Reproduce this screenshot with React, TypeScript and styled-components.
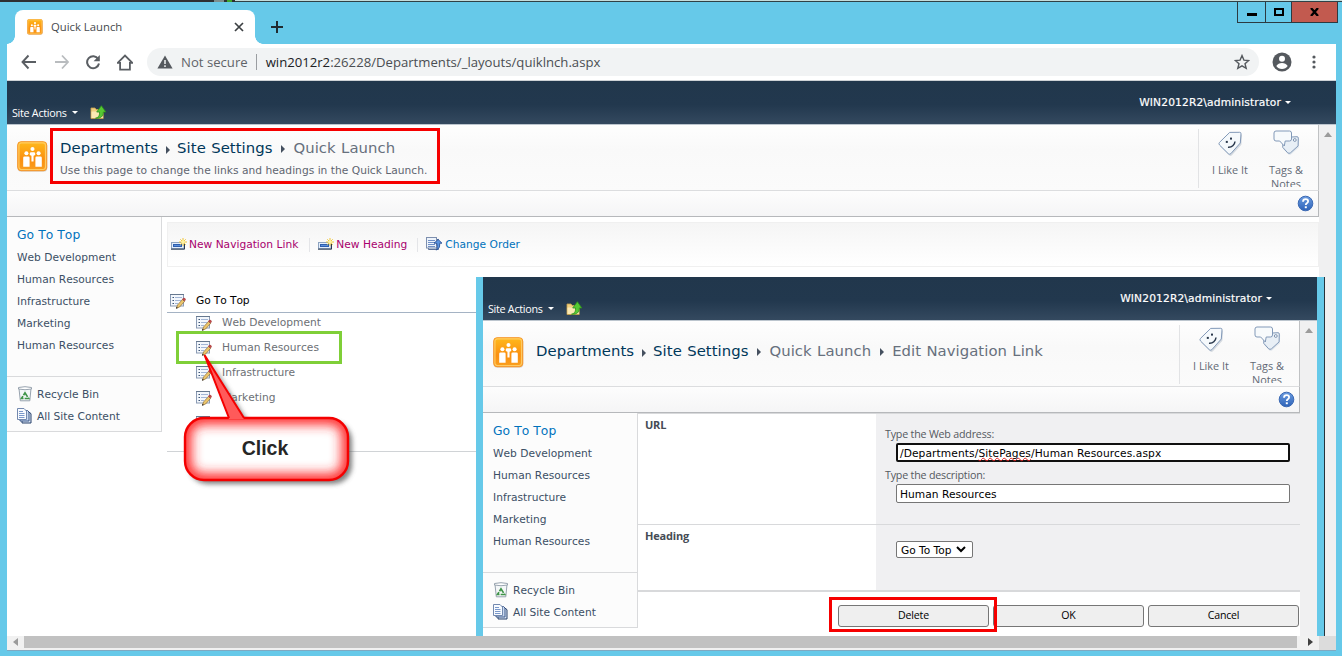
import React from "react";
import styled, { createGlobalStyle } from "styled-components";

const verdana = `Verdana, "DejaVu Sans", sans-serif`;
const segoe = `"Open Sans", "Noto Sans", sans-serif`;

const Global = createGlobalStyle`
  * { box-sizing: border-box; }
  body { margin: 0; background: #66c9e9; overflow: hidden; }
  svg { display: block; flex: none; }
`;

/* ---------- desktop and browser frame ---------- */

const Desktop = styled.div`
  position: relative;
  width: 1342px;
  height: 656px;
  display: flex;
  flex-direction: column;
  background: #66c9e9;
  font-family: ${verdana};
  font-size: 10.67px;
  font-kerning: none;
  white-space: nowrap;
  overflow: hidden;
`;

const BackEdge = styled.div`
  display: flex;
  height: 2px;
  flex: none;
  background: linear-gradient(#c3dcdb 50%, #2f4146 50%);
`;

const EdgePiece = styled.div<{ $w: number; $c: string }>`
  width: ${(p) => p.$w}px;
  background: ${(p) => p.$c};
`;

const TabStrip = styled.div`
  display: flex;
  justify-content: space-between;
  height: 42px;
  flex: none;
  padding: 0 4px 0 15px;
`;

const TabSide = styled.div`
  display: flex;
  align-items: flex-end;
`;

const Tab = styled.div`
  position: relative;
  display: flex;
  align-items: center;
  width: 240px;
  height: 34px;
  padding: 0 11px 0 12px;
  background: #fff;
  border-radius: 8px 8px 0 0;
  font: 11.3px ${segoe};
  color: #45494d;
  &::before,
  &::after {
    content: "";
    position: absolute;
    bottom: 0;
    width: 8px;
    height: 8px;
  }
  &::before {
    left: -8px;
    background: radial-gradient(circle at 0 0, transparent 7.5px, #fff 8px);
  }
  &::after {
    right: -8px;
    background: radial-gradient(circle at 100% 0, transparent 7.5px, #fff 8px);
  }
`;

const TabTitle = styled.span`
  flex: 1;
  margin-left: 8px;
  padding-bottom: 2px;
`;

const NewTab = styled.div`
  margin: 0 0 11px 16px;
`;

const WindowButtons = styled.div`
  display: flex;
  height: 21px;
  border: 1px solid #2c3a40;
  border-top: 0;
`;

const WindowButton = styled.div<{ $w: number; $close?: boolean }>`
  display: flex;
  align-items: center;
  justify-content: center;
  width: ${(p) => p.$w}px;
  background: ${(p) => (p.$close ? "#c25a4f" : "transparent")};
  & + & {
    border-left: 1px solid #2c3a40;
  }
`;

const Frame = styled.div`
  display: flex;
  flex-direction: column;
  width: 1329px;
  height: 607px;
  margin-left: 7px;
  flex: none;
  background: #fff;
  border-bottom: 1px solid #7fa9c2;
`;

const AddressRow = styled.div`
  display: flex;
  align-items: center;
  height: 37px;
  flex: none;
  padding-left: 13px;
  border-bottom: 1px solid #cdd2d6;
`;

const NavButton = styled.div<{ $gap?: number }>`
  margin-right: ${(p) => p.$gap ?? 14}px;
`;

const Omnibox = styled.div`
  display: flex;
  align-items: center;
  width: 1112px;
  height: 28px;
  padding: 0 9px 0 10px;
  border-radius: 14px;
  background: #f1f3f4;
  font: 13.15px ${segoe};
  color: #5f6368;
`;

const Divider = styled.span<{ $h: number; $c: string; $m: string }>`
  width: 1px;
  height: ${(p) => p.$h}px;
  margin: ${(p) => p.$m};
  background: ${(p) => p.$c};
`;

const Url = styled.span`
  flex: 1;
  color: #4a4e52;
  b {
    font-weight: 400;
    color: #202124;
  }
`;

const HorizontalScroll = styled.div`
  display: flex;
  height: 14px;
  flex: none;
  background: #f1f1f1;
`;

const ScrollArrowCell = styled.div<{ $w: number }>`
  display: flex;
  align-items: center;
  justify-content: center;
  width: ${(p) => p.$w}px;
  height: 12px;
`;

const ScrollThumb = styled.div`
  width: 1273px;
  height: 12px;
  background: #c1c1c1;
`;

const ScrollCorner = styled.div`
  width: 17px;
  background: #dcdcdc;
`;

/* ---------- site page ---------- */

const Page = styled.div`
  display: flex;
  flex-direction: column;
  flex: 1;
  min-width: 0;
  min-height: 0;
  background: #fff;
`;

const TopBar = styled.div`
  display: flex;
  justify-content: space-between;
  height: 44px;
  flex: none;
  padding: 0 45px 0 5px;
  background: linear-gradient(#21374c 0, #22384e 55%, #34495f 100%);
  border-bottom: 1px solid #bcc5ce;
  color: #fff;
`;

const SiteActions = styled.div`
  display: flex;
  align-items: center;
  align-self: flex-end;
  height: 24px;
  font: 10.8px ${segoe};
  letter-spacing: -0.3px;
`;

const Caret = styled.span`
  margin: 0 12px 0 5px;
  border: 3px solid transparent;
  border-top-color: currentColor;
  border-bottom: 0;
`;

const UserMenu = styled.div`
  display: flex;
  align-items: center;
  height: 42px;
  letter-spacing: 0.14px;
  -webkit-text-stroke: 0.2px #fff;
  ${Caret} {
    margin: 0 0 0 4px;
  }
`;

const Below = styled.div`
  display: flex;
  flex: 1;
  min-height: 0;
`;

const Main = styled.div`
  flex: 1;
  min-width: 0;
`;

const Gutter = styled.div`
  width: 17px;
  padding: 7px 0 0 5px;
  background: #f0f0f1;
`;

const TitleArea = styled.div`
  display: flex;
  height: 66px;
  padding-left: 10px;
  background: linear-gradient(#fefefe, #f9f9f9 40%, #fbfbfb);
  border-right: 1px solid #c0c2c4;
  border-bottom: 1px solid #dcdddf;
`;

const LogoSlot = styled.div`
  width: 43px;
  padding-top: 16px;
`;

const Titles = styled.div<{ $single: boolean }>`
  flex: 1;
  padding-top: ${(p) => (p.$single ? 20 : 13)}px;
`;

const Crumbs = styled.div`
  display: flex;
  align-items: center;
  height: 20px;
  font-size: 14.85px;
  letter-spacing: 0.05px;
  word-spacing: 0.6px;
`;

const Crumb = styled.span<{ $link: boolean }>`
  color: ${(p) => (p.$link ? "#003759" : "#67707d")};
`;

const CrumbArrow = styled.span<{ $first: boolean }>`
  width: 4px;
  margin: ${(p) => (p.$first ? "4px 7px 0 8px" : "1px 8px 0 9px")};
  border: 4px solid transparent;
  border-left-color: #45505f;
  border-right: 0;
`;

const Description = styled.div`
  margin-top: 5px;
  line-height: 16px;
  letter-spacing: 0.015px;
  color: #5f6570;
`;

const Social = styled.div`
  display: flex;
  width: 120px;
  height: 59px;
  margin-top: 4px;
  padding-left: 3px;
  border-left: 1px solid #e2e3e5;
`;

const SocialItem = styled.div`
  display: flex;
  flex-direction: column;
  align-items: center;
  width: 56px;
  height: 58px;
  padding-top: 1px;
  overflow: hidden;
  font: 10.9px/14px ${segoe};
  color: #626975;
  text-align: center;
`;

const SocialLabel = styled.span`
  margin-top: 7px;
`;

const HelpBar = styled.div`
  display: flex;
  align-items: center;
  justify-content: flex-end;
  height: 26px;
  padding-right: 4px;
  background: linear-gradient(#fdfdfd, #f5f5f6);
  border-right: 1px solid #b6b8bb;
  border-bottom: 1px solid #b6b8bb;
`;

const Columns = styled.div`
  display: flex;
  align-items: flex-start;
`;

const Sidebar = styled.div`
  width: 155px;
  flex: none;
  background: #fcfcfc;
  border-right: 1px solid #d9dadc;
  color: #3b4f65;
`;

const SideSection = styled.div<{ $h: number; $top: number }>`
  height: ${(p) => p.$h}px;
  padding: ${(p) => p.$top}px 0 0 10px;
  border-bottom: 1px solid #d9dadc;
`;

const SideHeading = styled.div`
  height: 22px;
  line-height: 23px;
  font-size: 12.3px;
  letter-spacing: 0.06px;
  color: #0072bc;
`;

const SideLink = styled.div`
  display: flex;
  align-items: center;
  gap: 3px;
  height: 22px;
`;

/* ---------- quick launch list ---------- */

const ListArea = styled.div`
  flex: 1;
  padding: 5px 0 0 5px;
`;

const Commands = styled.div`
  display: flex;
  align-items: center;
  height: 45px;
  padding-left: 3px;
  background: linear-gradient(#f5f5f5, #fff);
  border: 1px solid #f0f0f0;
`;

const Command = styled.div<{ $visited?: boolean }>`
  display: flex;
  align-items: center;
  gap: 2px;
  color: ${(p) => (p.$visited ? "#a8006d" : "#0072bc")};
`;

const ListHeading = styled.div`
  display: flex;
  align-items: center;
  gap: 10px;
  height: 25px;
  margin-top: 21px;
  padding-left: 3px;
  border-bottom: 1px solid #a5b3c4;
  color: #000;
  letter-spacing: -0.1px;
  svg { margin-top: 2px; }
`;

const ListRows = styled.div`
  padding: 0 0 13px 29px;
  border-bottom: 1px solid #d0d3d6;
  color: #6c7075;
`;

const ListRow = styled.div`
  display: flex;
  gap: 10px;
  height: 25px;
  line-height: 20px;
  svg { margin-top: 3px; }
`;

/* ---------- edit window ---------- */

const EditWindow = styled.div`
  position: absolute;
  left: 476px;
  top: 277px;
  width: 849px;
  height: 359px;
  display: flex;
  border: solid #66c9e9;
  border-width: 0 8px 0 7px;
  &::after {
    content: "";
    position: absolute;
    right: -8px;
    width: 1px;
    height: 100%;
    background: #26343c;
  }
`;

const Form = styled.div`
  flex: 1;
  font: 10.7px ${segoe};
`;

const FormRow = styled.div<{ $h: number; $first?: boolean }>`
  display: flex;
  height: ${(p) => p.$h}px;
  border-top: ${(p) => (p.$first ? "1px solid #d8d9db" : "0")};
  border-bottom: ${(p) => (p.$first ? 1 : 2)}px solid #d8d9db;
`;

const FormName = styled.div`
  width: 238px;
  padding: 3px 0 0 7px;
  font: bold 11px/16px ${segoe};
  letter-spacing: -0.2px;
  color: #454c55;
`;

const FormFields = styled.div<{ $top: number }>`
  flex: 1;
  padding: ${(p) => p.$top}px 0 0 9px;
  background: #f0f0f2;
`;

const FieldLabel = styled.div`
  height: 14px;
  margin-bottom: 2px;
  line-height: 14px;
  letter-spacing: -0.2px;
  color: #55595f;
`;

const TextBox = styled.div<{ $focus?: boolean }>`
  width: 394px;
  height: 19px;
  margin: 0 0 6px 11px;
  padding-left: ${(p) => (p.$focus ? 2 : 3)}px;
  border: ${(p) => (p.$focus ? "2px solid #101010" : "1px solid #767676")};
  border-radius: 2px;
  background: #fff;
  font: 10.67px/${(p) => (p.$focus ? 17 : 19)}px ${verdana};
  letter-spacing: ${(p) => (p.$focus ? 0.09 : 0.02)}px;
  color: #000;
  u {
    text-decoration: underline wavy #e02020 0.7px;
    text-underline-offset: 0;
    text-decoration-skip-ink: none;
  }
`;

const SelectBox = styled.div`
  display: flex;
  align-items: center;
  gap: 5px;
  width: 77px;
  height: 17px;
  margin-left: 11px;
  padding-left: 4px;
  border: 1px solid #767676;
  border-radius: 2px;
  background: #fff;
  font: 10.6px ${verdana};
  color: #000;
`;

const Buttons = styled.div`
  display: flex;
  justify-content: flex-end;
  gap: 4px;
  padding: 13px 1px 0 0;
`;

const Button = styled.div`
  width: 151px;
  height: 22px;
  border: 1px solid #767676;
  border-radius: 3px;
  background: #efefef;
  font: 10.6px/19px ${segoe};
  letter-spacing: -0.2px;
  text-align: center;
  color: #000;
`;

/* ---------- annotations ---------- */

const Highlight = styled.div<{ $x: number; $y: number; $w: number; $h: number; $c: string }>`
  position: absolute;
  left: ${(p) => p.$x}px;
  top: ${(p) => p.$y}px;
  width: ${(p) => p.$w}px;
  height: ${(p) => p.$h}px;
  border: 3px solid ${(p) => p.$c};
`;

const Callout = styled.div`
  position: absolute;
  left: 176px;
  top: 346px;
  width: 190px;
  height: 150px;
`;

const CalloutText = styled.div`
  position: absolute;
  left: 8px;
  top: 71px;
  width: 162px;
  text-align: center;
  font: bold 19.5px/63px "Liberation Sans", Arial, sans-serif;
  color: #262626;
`;

/* ---------- icons ---------- */

const SiteLogo = ({ size }: { size: number }) => (
  <svg width={size} height={size} viewBox="0 0 32 32">
    <defs>
      <linearGradient id="logo" x1="0" y1="0" x2="0" y2="1">
        <stop offset="0" stopColor="#ffba1c" />
        <stop offset="0.6" stopColor="#fb8f10" />
        <stop offset="1" stopColor="#f9a01f" />
      </linearGradient>
    </defs>
    <rect x="0.7" y="1.7" width="30.6" height="30" rx="3.5" fill="#d9d9d9" />
    <rect x="0.7" y="0.7" width="30" height="30" rx="3.5" fill="url(#logo)" stroke="#f5952a" />
    <rect x="2" y="2" width="27.4" height="27.4" rx="2.5" fill="none" stroke="#ffcb62" strokeWidth="1.2" />
    <g fill="#fff">
      <circle cx="9.7" cy="12.6" r="2.1" />
      <circle cx="16" cy="8.2" r="2.1" />
      <circle cx="22.3" cy="12.6" r="2.1" />
      <path d="M6.4 17.4q0-1.4 1.4-1.4h3.8q1.4 0 1.4 1.4v9.3H6.4zM19 17.4q0-1.4 1.4-1.4h3.8q1.4 0 1.4 1.4v9.3H19zM13.2 12.900q0-1.400 1.400-1.400h2.800q1.400 0 1.400 1.400v1.500l-1.700.8v6h-2.200v-6l-1.700-.8z" />
    </g>
  </svg>
);

const FolderUpIcon = () => (
  <svg width="17" height="16" viewBox="0 0 17 16">
    <path d="M1 4h4l1.200 1.500h7v9H1z" fill="#f0cf80" stroke="#c9a24b" strokeWidth=".8" />
    <path d="M1.500 7.500h11.300v6.500H1.500z" fill="#fbe9b4" />
    <path d="M5.500 14.200c3.600-.9 4.200-3.200 4-6.200H6.700L11.400 1.700l4.400 6.300h-2.500c.3 4-2.300 6.700-7.800 6.200z" fill="#56c833" stroke="#2c8f1c" strokeWidth=".8" />
  </svg>
);

const LikeIcon = () => (
  <svg width="26" height="26" viewBox="0 0 26 26">
    <path d="M13.500 2.600l9.200.4q1.600.1 1.500 1.800l-.6 9-9.500 10.500q-1.300 1.300-2.800.1l-8.600-8.500q-1.200-1.400 0-2.800z" transform="translate(.8 .9)" fill="#d5dae0" />
    <path d="M12.700 2.400l10-.1q1.400 0 1.300 1.500l-.7 9.200-9.400 10.600q-1.200 1.200-2.600.1l-8.800-8.700q-1.100-1.300 0-2.600z" fill="#f5f9fc" stroke="#8299b8" />
    <g fill="#29384c">
      <rect x="8.800" y="10.900" width="2" height="2" />
      <rect x="13" y="7.600" width="2" height="2" />
    </g>
    <path d="M11 17.200q2.800.3 4.800-1.500t2.200-4.200" fill="none" stroke="#29384c" strokeWidth="1.500" />
  </svg>
);

const TagsIcon = () => (
  <svg width="28" height="26" viewBox="0 0 28 26">
    <path d="M11 11.500l5-4.300 9.200-.5q1.400 0 1.400 1.500l-.2 8.200-7.700 7q-1.600 1.200-3 0l-5-5.300z" fill="#dfe5ec" transform="translate(.5 .8)" />
    <path d="M11 11.500l5-4.300 9-.5q1.300 0 1.300 1.400l-.2 7.800-7.600 6.900q-1.500 1.100-2.800 0l-5-5.500z" fill="#e8eff6" stroke="#8299b8" />
    <circle cx="22.800" cy="10" r="1.400" fill="#fff" stroke="#7188a8" strokeWidth=".9" />
    <path d="M4 1h13.500q2 0 2 2v6q0 2-2 2h-4.300l-.9 5-4.600-5H4q-2 0-2-2V3q0-2 2-2z" fill="#f7fafc" stroke="#8299b8" />
  </svg>
);

const HelpIcon = () => (
  <svg width="17" height="17" viewBox="0 0 17 17">
    <defs>
      <linearGradient id="help" x1="0" y1="0" x2="0" y2="1">
        <stop offset="0" stopColor="#6b9ce0" />
        <stop offset="1" stopColor="#2d62b8" />
      </linearGradient>
    </defs>
    <circle cx="8.500" cy="8.500" r="7.300" fill="url(#help)" stroke="#3a68b3" />
    <path d="M6 6.700q0-2.500 2.600-2.500 2.500 0 2.500 2.100 0 1.200-1.300 2-1 .6-1 1.700" fill="none" stroke="#fff" strokeWidth="1.800" />
    <rect x="7.800" y="11.300" width="2" height="1.900" fill="#fff" />
  </svg>
);

const EditIcon = () => (
  <svg width="16" height="15" viewBox="0 0 16 15">
    <rect x=".5" y=".5" width="13" height="11.500" fill="#f3f7fc" stroke="#8b9bb4" />
    <path d="M0 .5h14" stroke="#66788f" />
    <path d="M2.500 3.500h1.500M2.500 6.500h1.500M2.500 9.500h1.500" stroke="#3d5678" />
    <path d="M5 3.500h7M5 6.500h6M5 9.500h3" stroke="#a3b6d6" />
    <path d="M6.500 14.200l1-3.200 5-5.500 2.200 1.800-5.100 5.700z" fill="#ecc66c" stroke="#8d6c36" strokeWidth=".7" />
    <path d="M12.300 5.300l1-1.100q1.600-.4 2.300 1.100l-.9 1.700z" fill="#c8494a" stroke="#913333" strokeWidth=".5" />
    <path d="M6 14.700l.5-1.900 1.300 1.100z" fill="#222" />
  </svg>
);

const NewItemIcon = () => (
  <svg width="16" height="14" viewBox="0 0 16 14">
    <rect x=".5" y="4.500" width="12.500" height="6" fill="#e4eefb" stroke="#8da3c0" />
    <path d="M0 11.200h13.500V6" fill="none" stroke="#27384f" />
    <rect x="2.500" y="6.500" width="8" height="2" fill="#5a8fdc" stroke="#2f5fae" />
    <path d="M12 0v8M8 4h8M9.300 1.300l5.400 5.400M14.700 1.300L9.300 6.700" stroke="#efc535" />
    <circle cx="12" cy="4" r="1.800" fill="#fff3a0" />
  </svg>
);

const OrderIcon = () => (
  <svg width="17" height="15" viewBox="0 0 17 15">
    <path d="M2.500 2.500h10v10h-10z" fill="#dbe5f4" stroke="#5d7196" />
    <rect x=".5" y=".5" width="10" height="10.500" fill="#edf3fb" stroke="#7d8fae" />
    <path d="M2 3.500h7M2 5.500h7M2 7.500h7M2 9.500h7" stroke="#6f8fc6" />
    <path d="M8 6.200l4.200-3.700 3.800 3.700h-2.200q1 4.300-3.300 7 1.600-3.600.2-7z" fill="#5c94e0" stroke="#244a8d" strokeWidth=".8" />
  </svg>
);

const RecycleIcon = () => (
  <svg width="17" height="16" viewBox="0 0 17 16">
    <path d="M2 2.500h12l-1.200 12.300H3.300z" fill="#f4f7f8" stroke="#8c99a6" strokeWidth=".9" />
    <path d="M1.500 1.500q6.500-1.600 13 0v1.500q-6.500 1.500-13 0z" fill="#fff" stroke="#8c99a6" strokeWidth=".9" />
    <path d="M8 6.800l3.600 5.700H4.500z" fill="none" stroke="#3f9448" strokeWidth="1.700" strokeDasharray="4.800 1.100" />
  </svg>
);

const ContentIcon = () => (
  <svg width="17" height="16" viewBox="0 0 17 16">
    <path d="M5 4.500h8l1 1.500v9H5z" fill="#dbe6f5" stroke="#27406a" />
    <path d="M3 2.500h7.500l1.500 1.500v9H3z" fill="#c9d9f0" stroke="#3d588a" />
    <path d="M.5.500h6.500l2.500 2.500v8.500h-9z" fill="#f8fbff" stroke="#7389af" />
    <path d="M2 3.500h4M2 5.500h5.500M2 7.500h5.500M2 9.500h5.500" stroke="#7998cb" />
  </svg>
);

const ArrowUp = () => (
  <svg width="8" height="5" viewBox="0 0 8 5">
    <path d="M0 5l4-5 4 5z" fill="#9b9b9b" />
  </svg>
);

/* ---------- composition ---------- */

type SitePageProps = {
  crumbs: string[];
  description?: string;
  children: React.ReactNode;
};

const SitePage = ({ crumbs, description, children }: SitePageProps) => (
  <Page>
    <TopBar>
      <SiteActions>
        Site Actions
        <Caret />
        <FolderUpIcon />
      </SiteActions>
      <UserMenu>
        WIN2012R2\administrator
        <Caret />
      </UserMenu>
    </TopBar>
    <Below>
      <Main>
        <TitleArea>
          <LogoSlot>
            <SiteLogo size={31} />
          </LogoSlot>
          <Titles $single={!description}>
            <Crumbs>
              {crumbs.map((name, i) => (
                <React.Fragment key={name}>
                  {i > 0 && <CrumbArrow $first={i === 1} />}
                  <Crumb $link={i < 2}>{name}</Crumb>
                </React.Fragment>
              ))}
            </Crumbs>
            {description && <Description>{description}</Description>}
          </Titles>
          <Social>
            <SocialItem>
              <LikeIcon />
              <SocialLabel>I Like It</SocialLabel>
            </SocialItem>
            <SocialItem>
              <TagsIcon />
              <SocialLabel>
                Tags &amp;
                <br />
                Notes
              </SocialLabel>
            </SocialItem>
          </Social>
        </TitleArea>
        <HelpBar>
          <HelpIcon />
        </HelpBar>
        <Columns>
          <Sidebar>
            <SideSection $h={160} $top={7}>
              <SideHeading>Go To Top</SideHeading>
              {["Web Development", "Human Resources", "Infrastructure", "Marketing", "Human Resources"].map((t, i) => (
                <SideLink key={i}>{t}</SideLink>
              ))}
            </SideSection>
            <SideSection $h={55} $top={6}>
              <SideLink>
                <RecycleIcon />
                Recycle Bin
              </SideLink>
              <SideLink>
                <ContentIcon />
                All Site Content
              </SideLink>
            </SideSection>
          </Sidebar>
          {children}
        </Columns>
      </Main>
      <Gutter>
        <ArrowUp />
      </Gutter>
    </Below>
  </Page>
);

export default function App() {
  return (
    <Desktop>
      <Global />
      <BackEdge>
        <EdgePiece $w={214} $c="#2e3032" />
        <EdgePiece $w={10} $c="#7d8f8e" />
        <EdgePiece $w={3} $c="#2e3032" />
        <EdgePiece $w={5} $c="#3fa52c" />
        <EdgePiece $w={3} $c="#2e3032" />
      </BackEdge>
      <TabStrip>
        <TabSide>
          <Tab>
            <SiteLogo size={16} />
            <TabTitle>Quick Launch</TabTitle>
            <svg width="10" height="10" viewBox="0 0 10 10">
              <path d="M1 1l8 8M9 1L1 9" stroke="#3c4043" strokeWidth="1.700" />
            </svg>
          </Tab>
          <NewTab>
            <svg width="12" height="12" viewBox="0 0 12 12">
              <path d="M6 0v12M0 6h12" stroke="#1f2a30" strokeWidth="2" />
            </svg>
          </NewTab>
        </TabSide>
        <WindowButtons>
          <WindowButton $w={27}>
            <svg width="10" height="10" viewBox="0 0 10 10">
              <rect y="6" width="10" height="3" fill="#000" />
            </svg>
          </WindowButton>
          <WindowButton $w={26}>
            <svg width="10" height="8" viewBox="0 0 10 8">
              <rect x="1" y="1" width="8" height="6" fill="none" stroke="#000" strokeWidth="2" />
            </svg>
          </WindowButton>
          <WindowButton $w={46} $close>
            <svg width="9" height="8" viewBox="0 0 9 8">
              <path d="M1 0l7 8M8 0L1 8" stroke="#000" strokeWidth="2.300" />
            </svg>
          </WindowButton>
        </WindowButtons>
      </TabStrip>
      <Frame>
        <AddressRow>
          <NavButton $gap={16}>
            <svg width="18" height="16" viewBox="0 0 18 16" fill="none" stroke="#5a5e63" strokeWidth="1.900">
              <path d="M2.500 8H16M8.500 1.500L2.500 8l6 6.500" />
            </svg>
          </NavButton>
          <NavButton $gap={14}>
            <svg width="16" height="16" viewBox="0 0 16 16" fill="none" stroke="#b9bcbf" strokeWidth="1.800">
              <path d="M1 8h12.500M8 1.500L14 8l-6 6.500" />
            </svg>
          </NavButton>
          <NavButton $gap={15}>
            <svg width="18" height="16" viewBox="0 0 18 16">
              <path d="M14.200 5A6 6 0 1 0 15 9.500" fill="none" stroke="#5a5e63" strokeWidth="2" />
              <path d="M15.800 1v6.200H9.600z" fill="#5a5e63" />
            </svg>
          </NavButton>
          <NavButton $gap={14}>
            <svg width="16" height="17" viewBox="0 0 16 17" fill="none" stroke="#5a5e63" strokeWidth="1.800">
              <path d="M.7 8.800L8 1.600l7.300 7.200h-2.400v6.800H3.100V8.800z" />
            </svg>
          </NavButton>
          <Omnibox>
            <svg width="16" height="14" viewBox="0 0 16 14">
              <path d="M8 .5L15.600 13.500H.4z" fill="#55595e" />
              <path d="M8 5v4M8 10.200v1.800" stroke="#f1f3f4" strokeWidth="1.500" />
            </svg>
            <Divider $h={1} $c="transparent" $m="0 7px 0 0" />
            Not secure
            <Divider $h={16} $c="#9a9da1" $m="0 9px 0 8px" />
            <Url>
              <b>win2012r2</b>:26228/Departments/_layouts/quiklnch.aspx
            </Url>
            <svg width="16" height="16" viewBox="0 0 16 16">
              <path d="M8 1.600l1.900 4.500 4.800.4-3.700 3.200 1.200 4.700L8 11.900l-4.200 2.500L5 9.700 1.300 6.500l4.800-.4z" fill="none" stroke="#55595e" strokeWidth="1.400" />
            </svg>
          </Omnibox>
          <Divider $h={1} $c="transparent" $m="0 12px 0 0" />
          <svg width="20" height="20" viewBox="0 0 20 20">
            <circle cx="10" cy="10" r="9.500" fill="#55595e" />
            <circle cx="10" cy="6.800" r="3" fill="#fff" />
            <path d="M4.300 14q1.900-2.900 5.700-2.900t5.700 2.900Q13.800 16.900 10 16.900T4.300 14z" fill="#fff" />
          </svg>
          <Divider $h={1} $c="transparent" $m="0 19px 0 0" />
          <svg width="4" height="14" viewBox="0 0 4 14" fill="#55595e">
            <circle cx="2" cy="2" r="1.600" />
            <circle cx="2" cy="7" r="1.600" />
            <circle cx="2" cy="12" r="1.600" />
          </svg>
        </AddressRow>
        <SitePage
          crumbs={["Departments", "Site Settings", "Quick Launch"]}
          description="Use this page to change the links and headings in the Quick Launch."
        >
          <ListArea>
            <Commands>
              <Command $visited>
                <NewItemIcon />
                New Navigation Link
              </Command>
              <Divider $h={14} $c="#e4e5e8" $m="0 8px 0 11px" />
              <Command $visited>
                <NewItemIcon />
                New Heading
              </Command>
              <Divider $h={14} $c="#e4e5e8" $m="0 8px 0 10px" />
              <Command>
                <OrderIcon />
                Change Order
              </Command>
            </Commands>
            <ListHeading>
              <EditIcon />
              Go To Top
            </ListHeading>
            <ListRows>
              {["Web Development", "Human Resources", "Infrastructure", "Marketing", "Human Resources"].map((t, i) => (
                <ListRow key={i}>
                  <EditIcon />
                  {t}
                </ListRow>
              ))}
            </ListRows>
          </ListArea>
        </SitePage>
        <HorizontalScroll>
          <ScrollArrowCell $w={17}>
            <svg width="5" height="8" viewBox="0 0 5 8">
              <path d="M5 0v8L0 4z" fill="#9b9b9b" />
            </svg>
          </ScrollArrowCell>
          <ScrollThumb />
          <ScrollArrowCell $w={22}>
            <Divider $h={1} $c="transparent" $m="0 4px 0 0" />
            <svg width="5" height="8" viewBox="0 0 5 8">
              <path d="M0 0v8l5-4z" fill="#404040" />
            </svg>
          </ScrollArrowCell>
          <ScrollCorner />
        </HorizontalScroll>
      </Frame>

      <EditWindow>
        <SitePage crumbs={["Departments", "Site Settings", "Quick Launch", "Edit Navigation Link"]}>
          <Form>
            <FormRow $h={112} $first>
              <FormName>URL</FormName>
              <FormFields $top={13}>
                <FieldLabel>Type the Web address:</FieldLabel>
                <TextBox $focus>
                  /Departments/<u>SitePages</u>/Human Resources.aspx
                </TextBox>
                <FieldLabel>Type the description:</FieldLabel>
                <TextBox>Human Resources</TextBox>
              </FormFields>
            </FormRow>
            <FormRow $h={67}>
              <FormName>Heading</FormName>
              <FormFields $top={16}>
                <SelectBox>
                  Go To Top
                  <svg width="10" height="7" viewBox="0 0 10 7">
                    <path d="M1 1l4 4 4-4" fill="none" stroke="#000" strokeWidth="2" />
                  </svg>
                </SelectBox>
              </FormFields>
            </FormRow>
            <Buttons>
              <Button>Delete</Button>
              <Button>OK</Button>
              <Button>Cancel</Button>
            </Buttons>
          </Form>
        </SitePage>
      </EditWindow>

      <Highlight $x={50} $y={128} $w={390} $h={56} $c="#f60000" />
      <Highlight $x={176} $y={331} $w={166} $h={33} $c="#7fcf38" />
      <Highlight $x={829} $y={597} $w={168} $h={35} $c="#f60000" />

      <Callout>
        <svg width="190" height="150" viewBox="0 0 190 150">
          <defs>
            <filter id="shade" x="-20%" y="-20%" width="150%" height="150%">
              <feGaussianBlur stdDeviation="2.500" />
            </filter>
            <filter id="glow" x="-20%" y="-30%" width="140%" height="160%">
              <feGaussianBlur stdDeviation="6" />
            </filter>
            <clipPath id="bubble">
              <rect x="9" y="72" width="163" height="62" rx="19" />
            </clipPath>
          </defs>
          <g transform="translate(4 4)" fill="#555" opacity="0.75" filter="url(#shade)">
            <rect x="9" y="72" width="163" height="62" rx="19" />
            <path d="M28 8l26 64h14z" />
          </g>
          <rect x="9" y="72" width="163" height="62" rx="19" fill="#fff" />
          <g clipPath="url(#bubble)">
            <rect x="7" y="70" width="167" height="66" rx="20" fill="none" stroke="#ff2a2a" strokeWidth="17" filter="url(#glow)" />
          </g>
          <rect x="9" y="72" width="163" height="62" rx="19" fill="none" stroke="#f40000" strokeWidth="2.400" />
          <path d="M53 73L28.500 9 68 73z" fill="#ff5a5a" />
          <path d="M53 72L28.500 9 68 72" fill="none" stroke="#f40000" strokeWidth="2" />
        </svg>
        <CalloutText>Click</CalloutText>
      </Callout>
    </Desktop>
  );
}
